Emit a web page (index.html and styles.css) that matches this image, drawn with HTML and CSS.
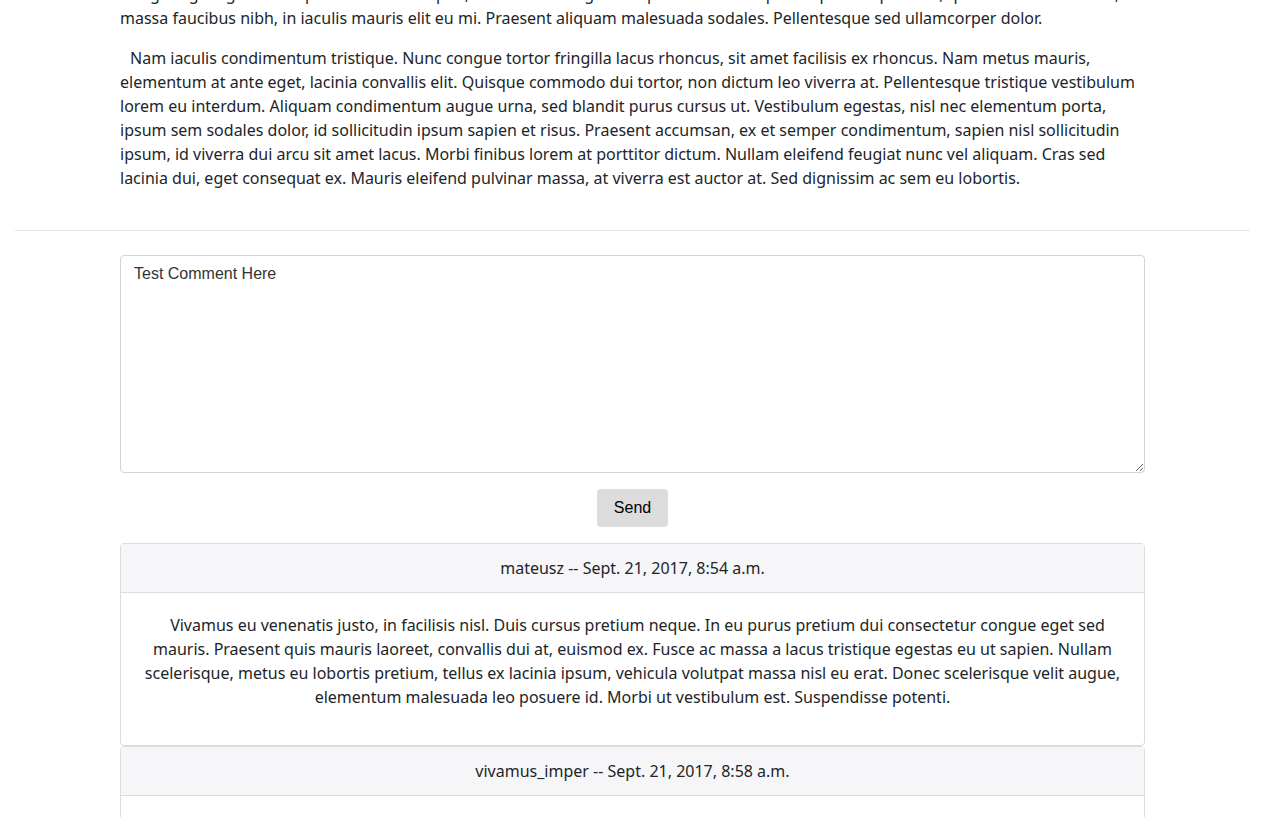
FILE: index.html
```html
<!DOCTYPE html>
<html lang="en">
<head>
<meta charset="utf-8">
<title>Post</title>
<link rel="stylesheet" href="styles.css">
</head>
<body>
<div class="page">
  <article class="post">
    <p class="post-text">Integer eget ligula vel sapien tincidunt aliquet, sed dictum magna tempor. Cras varius purus quis nisi pretium, quis facilisis nunc sem, massa faucibus nibh, in iaculis mauris elit eu mi. Praesent aliquam malesuada sodales. Pellentesque sed ullamcorper dolor.</p>
    <p class="post-text indent">Nam iaculis condimentum tristique. Nunc congue tortor fringilla lacus rhoncus, sit amet facilisis ex rhoncus. Nam metus mauris, elementum at ante eget, lacinia convallis elit. Quisque commodo dui tortor, non dictum leo viverra at. Pellentesque tristique vestibulum lorem eu interdum. Aliquam condimentum augue urna, sed blandit purus cursus ut. Vestibulum egestas, nisl nec elementum porta, ipsum sem sodales dolor, id sollicitudin ipsum sapien et risus. Praesent accumsan, ex et semper condimentum, sapien nisl sollicitudin ipsum, id viverra dui arcu sit amet lacus. Morbi finibus lorem at porttitor dictum. Nullam eleifend feugiat nunc vel aliquam. Cras sed lacinia dui, eget consequat ex. Mauris eleifend pulvinar massa, at viverra est auctor at. Sed dignissim ac sem eu lobortis.</p>
  </article>
  <hr class="divider">
  <section class="comments">
    <form class="comment-form">
      <textarea class="comment-input" name="comment">Test Comment Here</textarea>
      <button type="button" class="send-btn">Send</button>
    </form>
    <div class="card">
      <div class="card-header">mateusz -- Sept. 21, 2017, 8:54 a.m.</div>
      <div class="card-body">
        <p class="indent">Vivamus eu venenatis justo, in facilisis nisl. Duis cursus pretium neque. In eu purus pretium dui consectetur congue eget sed mauris. Praesent quis mauris laoreet, convallis dui at, euismod ex. Fusce ac massa a lacus tristique egestas eu ut sapien. Nullam scelerisque, metus eu lobortis pretium, tellus ex lacinia ipsum, vehicula volutpat massa nisl eu erat. Donec scelerisque velit augue, elementum malesuada leo posuere id. Morbi ut vestibulum est. Suspendisse potenti.</p>
      </div>
    </div>
    <div class="card">
      <div class="card-header">vivamus_imper -- Sept. 21, 2017, 8:58 a.m.</div>
      <div class="card-body">
        <p class="indent">Aenean imperdiet lectus sed nibh tempus, vel tincidunt lectus pharetra. Curabitur a magna vitae lorem tincidunt pretium.</p>
      </div>
    </div>
  </section>
</div>
</body>
</html>
```
FILE: styles.css
```css
html, body {
  margin: 0;
  padding: 0;
  background: #fff;
}
body {
  font-family: "Noto Sans", "Open Sans", sans-serif;
  font-size: 16px;
  line-height: 24px;
  color: #212529;
}
.page {
  padding: 0 15px;
}
.post {
  width: 1025px;
  margin: -18px auto 0;
  padding-bottom: 8px;
}
.post-text {
  margin: 0 0 16px;
}
.indent {
  text-indent: 10px;
}
.divider {
  border: 0;
  border-top: 1px solid #e5e5e5;
  margin: 16px 0 24px;
}
.comments {
  width: 1025px;
  margin: 0 auto;
}
.comment-form {
  display: flex;
  flex-direction: column;
  align-items: center;
  gap: 16px;
  margin-bottom: 16px;
}
.comment-input {
  box-sizing: border-box;
  width: 100%;
  height: 218px;
  padding: 9px 13px;
  border: 1px solid #d3d3d3;
  border-radius: 4px;
  font-family: "Liberation Sans", Arial, sans-serif;
  font-size: 16px;
  line-height: 18px;
  color: #333;
  resize: vertical;
  outline: none;
}
.send-btn {
  box-sizing: border-box;
  width: 71px;
  height: 38px;
  border: 0;
  border-radius: 4px;
  background: #dcdcdc;
  font-family: "Liberation Sans", Arial, sans-serif;
  font-size: 16px;
  color: #000;
  padding: 0;
}
.card {
  border: 1px solid #dcdcdc;
  border-radius: 4px;
  background: #fff;
  text-align: center;
}
.card-header {
  background: #f6f6f8;
  padding: 12px 20px;
  border-bottom: 1px solid #dcdcdc;
}
.card-body {
  padding: 20px;
}
.card-body p {
  margin: 0 0 16px;
}
```
